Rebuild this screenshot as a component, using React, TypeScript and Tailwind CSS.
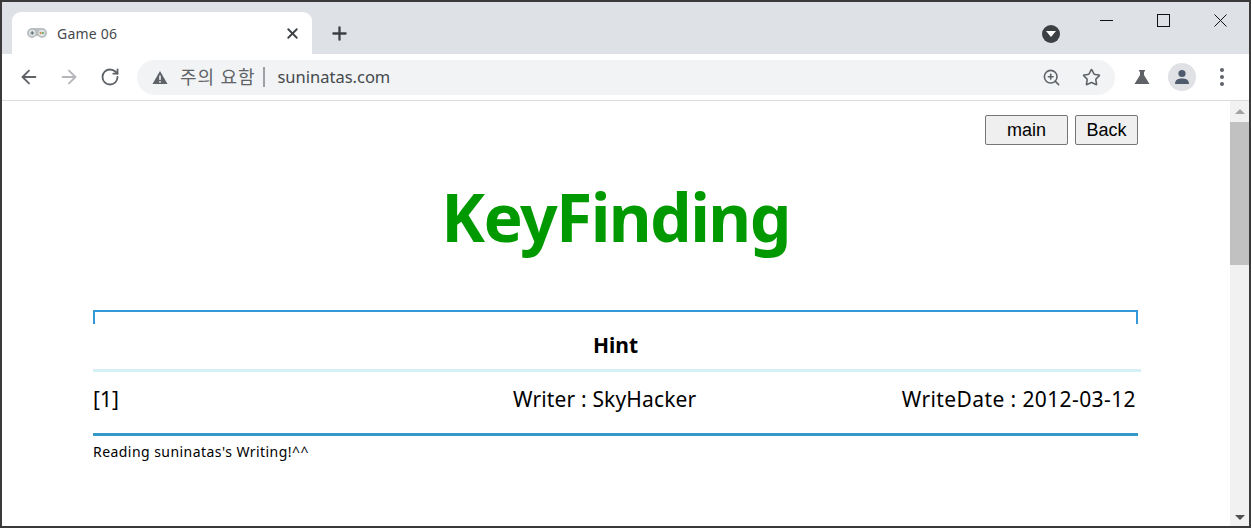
import React from 'react';
import { ArrowLeft, ArrowRight, RotateCw, X, Plus, ZoomIn, Star } from 'lucide-react';

const font = "font-['Noto_Sans','Noto_Sans_CJK_KR',sans-serif]";

const App: React.FC = () => {
  return (
    <div className={`w-[1251px] h-[528px] overflow-hidden flex flex-col bg-white border-2 border-[#3a3a3a] ${font}`}>
      {/* Tab strip */}
      <div className="h-[52px] shrink-0 bg-[#dee1e6] flex items-end relative">
        <div className="ml-[10px] w-[300px] h-[42px] bg-white rounded-t-[9px] flex items-center pl-[15px] pr-[11px]">
          <svg width="20" height="12" viewBox="0 0 20 12">
            <path d="M5 1 H15 A5 5 0 0 1 15 11 C13 11 12 9 10 9 C8 9 7 11 5 11 A5 5 0 0 1 5 1 Z" fill="#b9bec1" />
            <circle cx="5.2" cy="6" r="3.3" fill="#dfe2e3" />
            <circle cx="14.8" cy="6" r="3.3" fill="#dfe2e3" />
            <path d="M3.5 6 H7 M5.2 4.2 V7.8" stroke="#5f6f73" strokeWidth="1.2" />
            <circle cx="13.6" cy="6" r="1" fill="#d0803a" />
            <circle cx="16" cy="6" r="1" fill="#5aa55a" />
          </svg>
          <span className="ml-[10px] text-[14px] text-[#45494d] tracking-[0.2px]">Game 06</span>
          <X className="ml-auto text-[#3c4043]" size={17} strokeWidth={2.6} />
        </div>
        <div className="ml-[17px] mb-[10px] text-[#3c4043]">
          <Plus size={21} strokeWidth={2.6} />
        </div>
        {/* window controls */}
        <div className="absolute right-[22px] top-[12px] flex items-start gap-[44px]">
          <svg width="13" height="13" viewBox="0 0 13 13" shapeRendering="crispEdges">
            <path d="M0 6.5 H13" stroke="#111" strokeWidth="1" />
          </svg>
          <svg width="13" height="13" viewBox="0 0 13 13" shapeRendering="crispEdges">
            <rect x="0.5" y="0.5" width="12" height="12" fill="none" stroke="#111" strokeWidth="1" />
          </svg>
          <svg width="13" height="13" viewBox="0 0 13 13">
            <path d="M0.5 0.5 L12.5 12.5 M12.5 0.5 L0.5 12.5" stroke="#111" strokeWidth="1" />
          </svg>
        </div>
        <div className="absolute left-[1040px] top-[23px] w-[18px] h-[18px] rounded-full bg-[#3c4043] flex items-center justify-center">
          <div className="w-0 h-0 border-l-[5px] border-r-[5px] border-t-[6px] border-l-transparent border-r-transparent border-t-white" />
        </div>
      </div>

      {/* Toolbar */}
      <div className="h-[47px] shrink-0 bg-white border-b border-[#dadce0] flex items-center pl-[16px]">
        <ArrowLeft size={22} className="text-[#5f6368]" strokeWidth={2} />
        <ArrowRight size={22} className="ml-[18px] text-[#b4b6b9]" strokeWidth={2} />
        <RotateCw size={20} className="ml-[20px] text-[#5f6368]" strokeWidth={2.2} />
        <div className="ml-[17px] w-[978px] h-[35px] rounded-full bg-[#f1f3f4] flex items-center pl-[15px] pr-[14px]">
          <svg width="16" height="15" viewBox="0 0 16 15">
            <path d="M8 1 L15.5 14 H0.5 Z" fill="#5f6368" />
            <rect x="7.2" y="5.5" width="1.6" height="4.5" fill="#f1f3f4" />
            <rect x="7.2" y="11" width="1.6" height="1.6" fill="#f1f3f4" />
          </svg>
          <span className="ml-[12px] text-[18px] leading-none text-[#5f6368] tracking-[0.9px]">주의 요함</span>
          <span className="ml-[8px] w-[2px] h-[20px] bg-[#9aa0a6]" />
          <span className="ml-[12px] pt-[1px] text-[16.5px] text-[#45494d]">suninatas.com</span>
          <ZoomIn size={19} className="ml-auto text-[#5f6368]" strokeWidth={2} />
          <Star size={19} className="ml-[21px] text-[#5f6368]" strokeWidth={2} />
        </div>
        <svg className="ml-[19px]" width="16" height="16" viewBox="0 0 16 16">
          <path d="M5 1 H11 V2.5 H10 V6 L15.5 15 H0.5 L6 6 V2.5 H5 Z" fill="#5f6368" />
        </svg>
        <div className="ml-[18px] w-[28px] h-[28px] rounded-full bg-[#dfe1e5] flex items-center justify-center">
          <svg width="16" height="16" viewBox="0 0 16 16">
            <circle cx="8" cy="4.5" r="3.6" fill="#4f5b6d" />
            <path d="M1 15 C1 10.5 4.5 9.5 8 9.5 C11.5 9.5 15 10.5 15 15 Z" fill="#4f5b6d" />
          </svg>
        </div>
        <div className="ml-[24px] flex flex-col gap-[3px]">
          <div className="w-[4px] h-[4px] rounded-full bg-[#5f6368]" />
          <div className="w-[4px] h-[4px] rounded-full bg-[#5f6368]" />
          <div className="w-[4px] h-[4px] rounded-full bg-[#5f6368]" />
        </div>
      </div>

      {/* Viewport */}
      <div className="flex-1 min-h-0 flex">
        <div className="flex-1 min-w-0 overflow-hidden pl-[91px] pr-[91px] bg-white">
          <div className="w-[1045px]">
            <div className="flex justify-end gap-[7px] pt-[14px]">
              <button className="w-[83px] h-[30px] bg-[#efefef] border border-[#767676] rounded-[2px] text-[18px] text-black font-['Liberation_Sans',sans-serif]">main</button>
              <button className="w-[63px] h-[30px] bg-[#efefef] border border-[#767676] rounded-[2px] text-[18px] text-black font-['Liberation_Sans',sans-serif]">Back</button>
            </div>
            <h1 className="mt-[31px] h-[82px] text-center text-[66px] leading-[80px] font-bold text-[#009a00] tracking-[-1.6px]">KeyFinding</h1>
            <div className="mt-[52px] h-[14px] border-t-2 border-x-2 border-[#3498db]" />
            <div className="w-[1048px] h-[48px] border-b-[3px] border-[#d6f0f8] flex items-center justify-center pr-[3px] pb-[2px] text-[21px] font-bold text-black">Hint</div>
            <div className="h-[61px] flex items-center text-[21px] text-black pr-[2px] pb-[5px]">
              <span className="w-[420px]">[1]</span>
              <span className="tracking-[0.15px]">Writer : SkyHacker</span>
              <span className="ml-auto tracking-[0.4px]">WriteDate : 2012-03-12</span>
            </div>
            <div className="h-[3px] bg-[#3498c8]" />
            <p className="mt-[5px] text-[14px] text-black tracking-[0.45px]">Reading suninatas's Writing!^^</p>
          </div>
        </div>
        {/* Scrollbar */}
        <div className="w-[19px] shrink-0 bg-[#f1f1f1] flex flex-col items-center">
          <div className="h-[21px] flex items-center justify-center">
            <div className="w-0 h-0 border-l-[5px] border-r-[5px] border-b-[5px] border-l-transparent border-r-transparent border-b-[#a3a3a3]" />
          </div>
          <div className="w-full h-[143px] bg-[#c1c1c1]" />
          <div className="mt-auto h-[17px] flex items-center justify-center">
            <div className="w-0 h-0 border-l-[5px] border-r-[5px] border-t-[5px] border-l-transparent border-r-transparent border-t-[#505050]" />
          </div>
        </div>
      </div>
    </div>
  );
};

export default App;
